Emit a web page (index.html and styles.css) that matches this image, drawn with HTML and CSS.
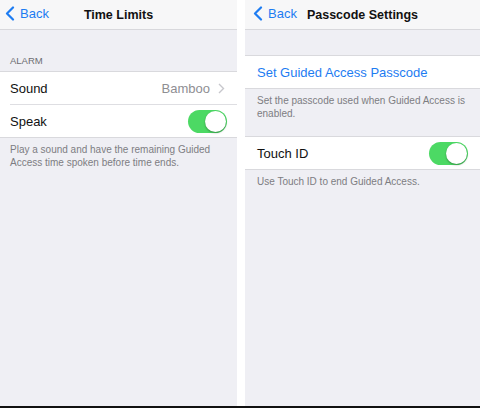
FILE: index.html
```html
<!DOCTYPE html>
<html lang="en">
<head>
  <meta charset="UTF-8">
  <meta name="viewport" content="width=device-width, initial-scale=1.0">
  <title>Guided Access Settings</title>
  <link rel="stylesheet" href="styles.css">
</head>
<body>
  <div class="screens">
    <!-- Time limits screen -->
    <div class="screen screen-left">
      <div class="navbar">
        <a class="back" href="#">
          <svg width="10" height="15" viewBox="0 0 10 15"><polyline points="8,1.5 2,7.5 8,13.5" fill="none" stroke="#1d7cf2" stroke-width="2.2" stroke-linecap="round" stroke-linejoin="round"/></svg>
          <span>Back</span>
        </a>
        <div class="title">Time Limits</div>
      </div>
      <div class="group-header">ALARM</div>
      <div class="group">
        <div class="row">
          <span class="label">Sound</span>
          <span class="detail">Bamboo</span>
          <svg class="chevron" width="7" height="11" viewBox="0 0 7 11"><polyline points="1,1 5.5,5.5 1,10" fill="none" stroke="#c7c7cc" stroke-width="1.4"/></svg>
        </div>
        <div class="row">
          <span class="label">Speak</span>
          <span class="toggle on"><span class="knob"></span></span>
        </div>
      </div>
      <div class="group-footer">Play a sound and have the remaining Guided Access time spoken before time ends.</div>
    </div>

    <!-- Passcode settings screen -->
    <div class="screen screen-right">
      <div class="navbar">
        <a class="back" href="#">
          <svg width="10" height="15" viewBox="0 0 10 15"><polyline points="8,1.5 2,7.5 8,13.5" fill="none" stroke="#1d7cf2" stroke-width="2.2" stroke-linecap="round" stroke-linejoin="round"/></svg>
          <span>Back</span>
        </a>
        <div class="title">Passcode Settings</div>
      </div>
      <div class="spacer"></div>
      <div class="group">
        <div class="row">
          <span class="label link">Set Guided Access Passcode</span>
        </div>
      </div>
      <div class="group-footer">Set the passcode used when Guided Access is enabled.</div>
      <div class="group">
        <div class="row">
          <span class="label">Touch ID</span>
          <span class="toggle on"><span class="knob"></span></span>
        </div>
      </div>
      <div class="group-footer">Use Touch ID to end Guided Access.</div>
    </div>
  </div>
  <div class="bottom-bar"></div>
</body>
</html>
```

FILE: styles.css
```css
body {
  margin: 0;
  background-color: #ffffff;
  font-family: "Liberation Sans", Arial, sans-serif;
  color: #111;
}
.screens {
  display: flex;
  gap: 8px;
  height: 406px;
}
.screen {
  background-color: #efeff4;
  overflow: hidden;
}
.screen-left {
  width: 237px;
  --pad: 10px;
}
.screen-right {
  flex: 1;
  --pad: 12px;
}
.bottom-bar {
  height: 2px;
  background-color: #111;
}

/* navigation bar */
.navbar {
  position: relative;
  height: 29px;
  background-color: #f7f7f8;
  border-bottom: 1px solid #d8d8dc;
  display: flex;
  align-items: center;
  justify-content: center;
}
.back {
  position: absolute;
  left: 5px;
  top: 6px;
  display: flex;
  align-items: center;
  gap: 5px;
  color: #1d7cf2;
  text-decoration: none;
  font-size: 13px;
}
.screen-right .back {
  left: 8px;
}
.title {
  font-size: 12.5px;
  font-weight: bold;
  color: #111;
}

/* grouped table */
.group-header {
  padding: 25px var(--pad) 5px;
  font-size: 9.5px;
  line-height: 11px;
  color: #6d6d72;
}
.spacer {
  height: 25px;
}
.group {
  background-color: #fff;
  border-top: 1px solid #d9d9dd;
  border-bottom: 1px solid #d9d9dd;
}
.row {
  height: 32px;
  display: flex;
  align-items: center;
  padding: 0 var(--pad);
  font-size: 13px;
}
.row + .row {
  border-top: 1px solid #dedee2;
  margin-left: var(--pad);
  padding-left: 0;
}
.label {
  flex: 1;
}
.label.link {
  color: #1d7cf2;
}
.detail {
  color: #8e8e93;
  margin-right: 8px;
}
.chevron {
  margin-right: 2px;
}
.group-footer {
  padding: 5px var(--pad) 16px;
  font-size: 10px;
  line-height: 13px;
  color: #7d7d82;
}

/* switch */
.toggle {
  position: relative;
  width: 39px;
  height: 23px;
  border-radius: 12px;
  background-color: #4cd964;
}
.knob {
  position: absolute;
  right: 1px;
  top: 1px;
  width: 21px;
  height: 21px;
  border-radius: 50%;
  background-color: #fff;
  box-shadow: 0 1px 2px rgba(0, 0, 0, 0.35);
}
```
